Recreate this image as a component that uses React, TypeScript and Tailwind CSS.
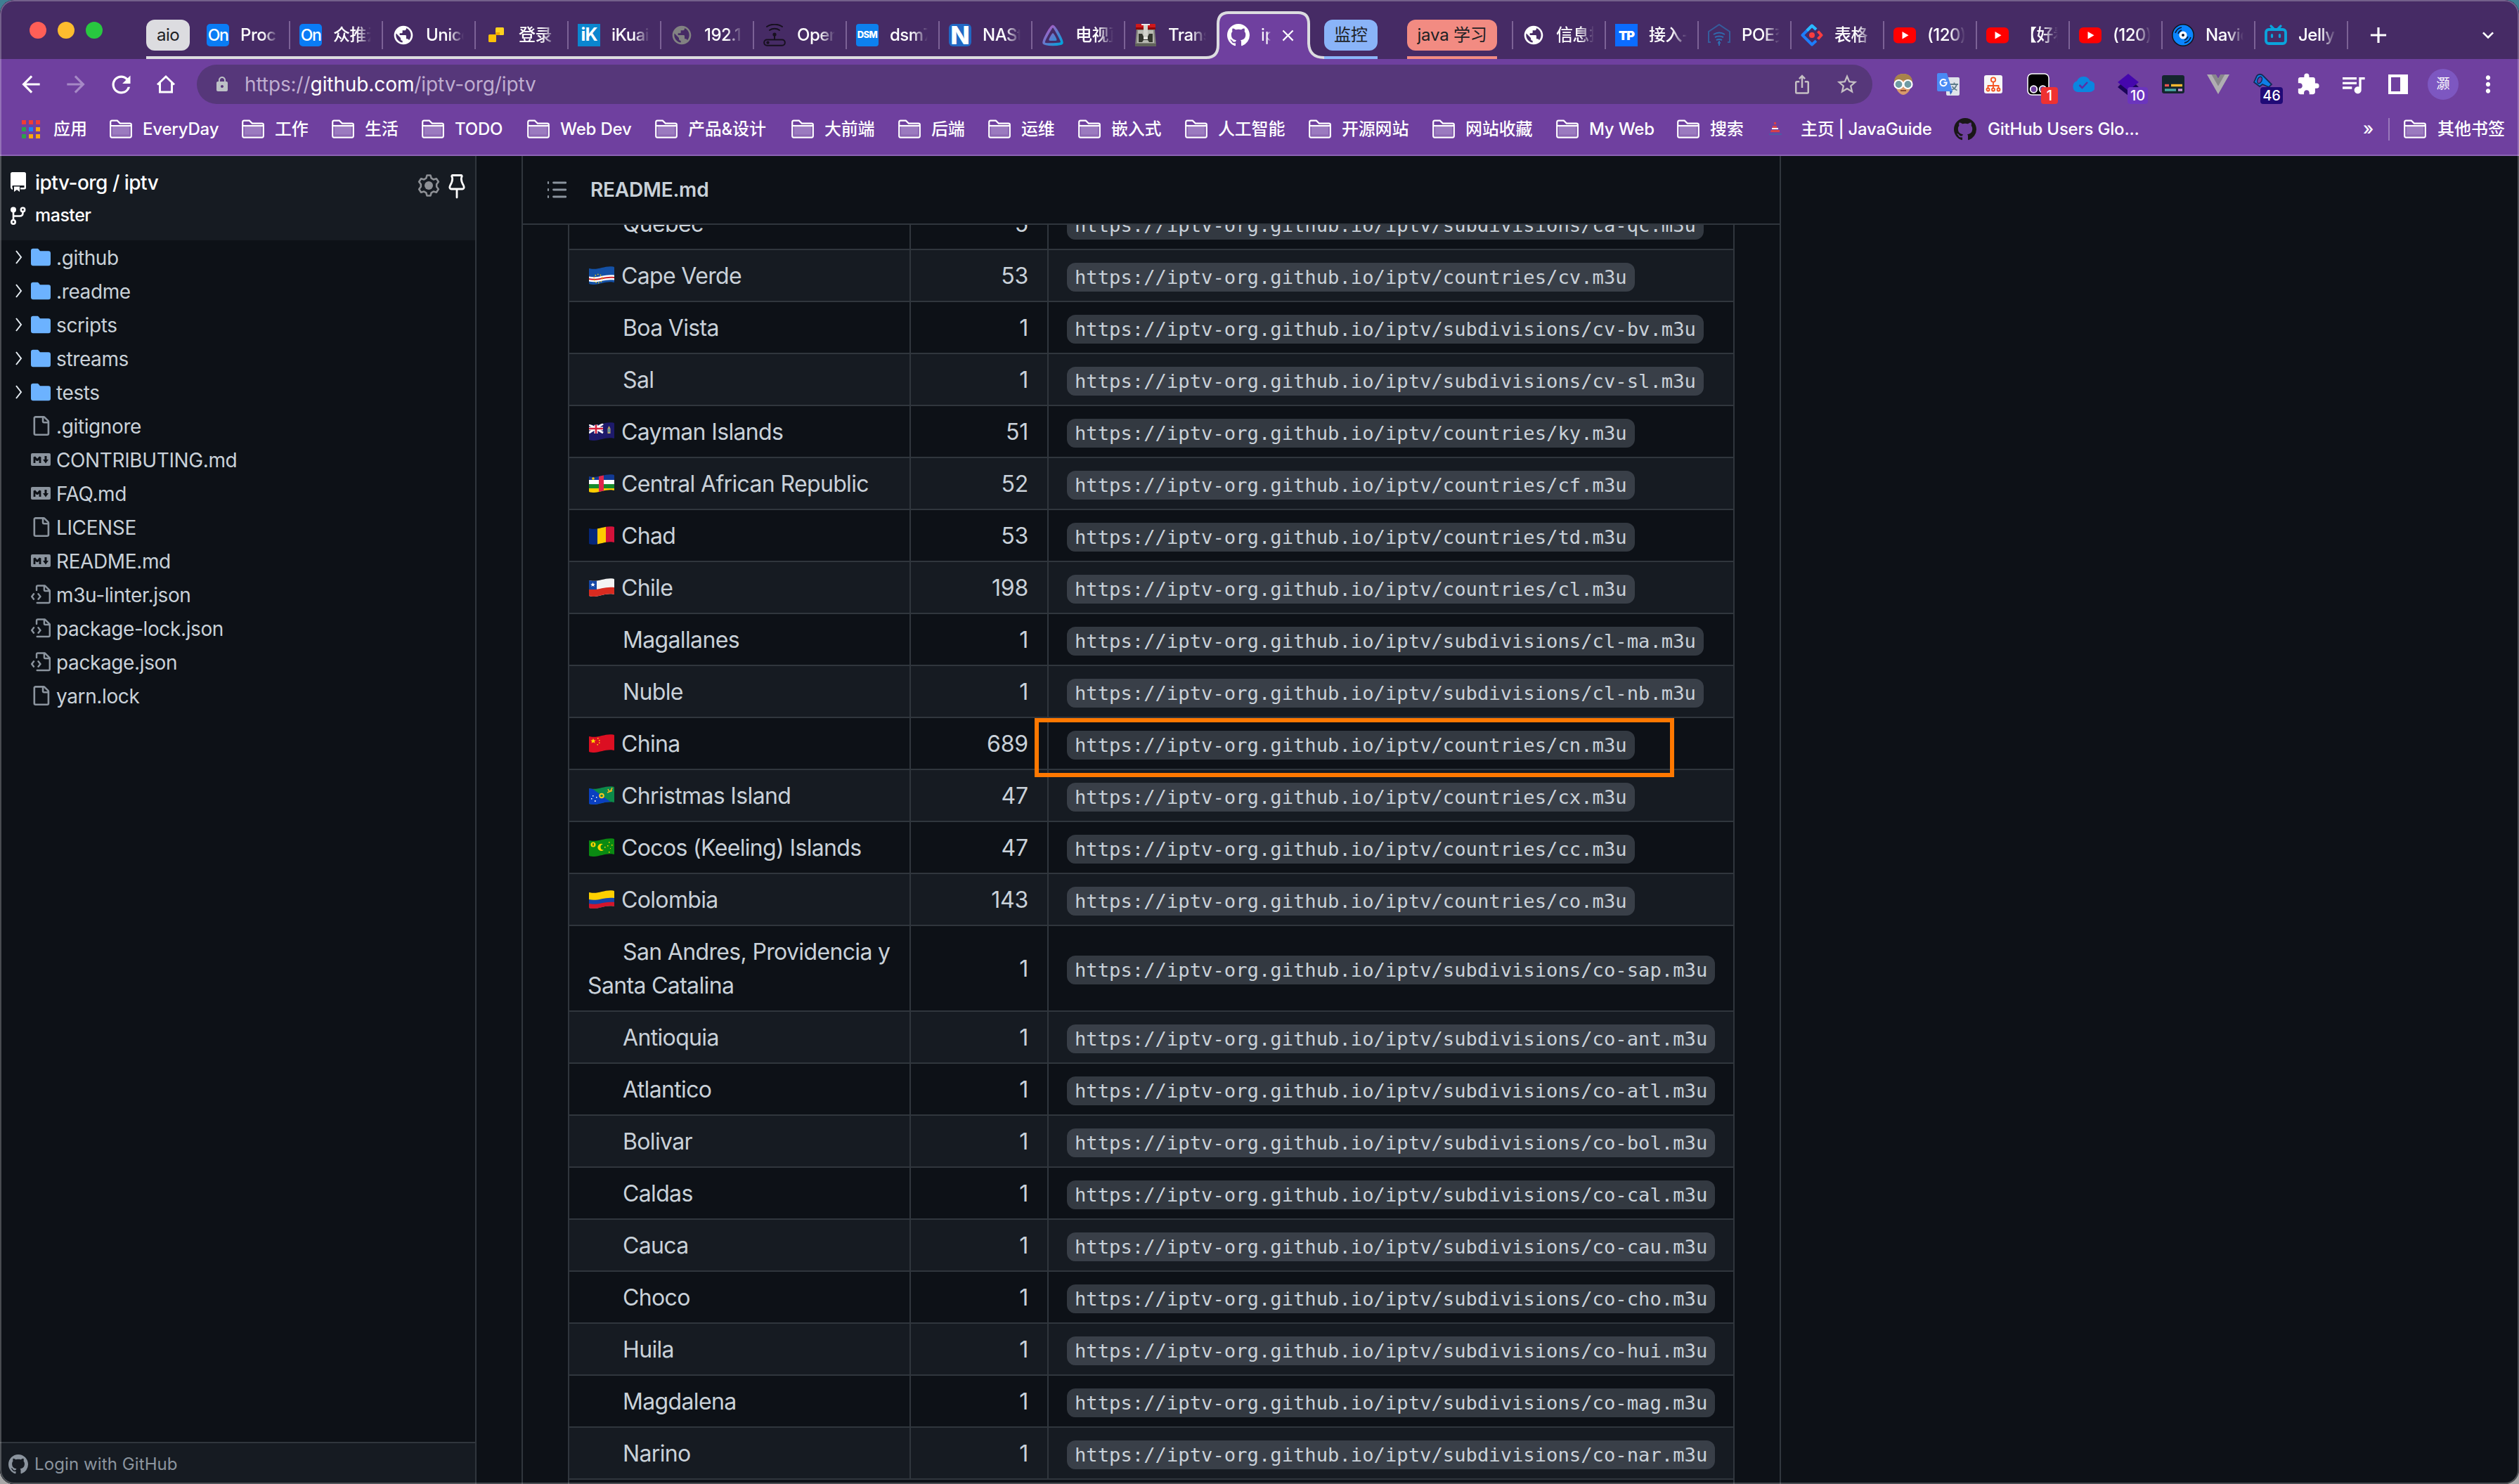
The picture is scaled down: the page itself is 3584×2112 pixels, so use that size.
import React, { useId } from 'react';
import {
  MdAdd,
  MdArrowBack,
  MdArrowForward,
  MdClose,
  MdExpandMore,
  MdExtension,
  MdIosShare,
  MdLock,
  MdMoreVert,
  MdPublic,
  MdQueueMusic,
  MdRefresh,
  MdStarBorder,
} from 'react-icons/md';

/* ---------- shared icons ---------- */

function GitHubMark({ className }: { className: string }) {
  return (
    <svg viewBox="0 0 16 16" fill="currentColor" className={className}>
      <path d="M8 0C3.58 0 0 3.58 0 8c0 3.54 2.29 6.53 5.47 7.59.4.07.55-.17.55-.38 0-.19-.01-.82-.01-1.49-2.01.37-2.53-.49-2.69-.94-.09-.23-.48-.94-.82-1.13-.28-.15-.68-.52-.01-.53.63-.01 1.08.58 1.23.82.72 1.21 1.87.87 2.33.66.07-.52.28-.87.51-1.07-1.78-.2-3.64-.89-3.64-3.95 0-.87.31-1.59.82-2.15-.08-.2-.36-1.02.08-2.12 0 0 .67-.21 2.2.82.64-.18 1.32-.27 2-.27.68 0 1.36.09 2 .27 1.53-1.04 2.2-.82 2.2-.82.44 1.1.16 1.92.08 2.12.51.56.82 1.27.82 2.15 0 3.07-1.87 3.75-3.65 3.95.29.25.54.73.54 1.48 0 1.07-.01 1.93-.01 2.2 0 .21.15.46.55.38A8.013 8.013 0 0016 8c0-4.42-3.58-8-8-8z" />
    </svg>
  );
}

function BookmarkFolder() {
  return (
    <svg viewBox="0 0 32 28" className="h-[28px] w-[32px] shrink-0" fill="none">
      <path d="M1.200 4C1.200 2.500 2 1.600 3.300 1.600h7.500l4 4h14c1.400 0 2 .8 2 2v16c0 1.300-.6 2-2 2H3.200c-1.400 0-2-.7-2-2Z" stroke="#fff" strokeWidth="2.200" />
      <path d="M3.500 10h25v14h-25Z" fill="#9b7abf" />
      <path d="M3.500 21.500h25V24h-25Z" fill="#8d68b4" />
      <path d="M2 9h28" stroke="#fff" strokeWidth="2.200" />
    </svg>
  );
}

/* ---------- tab favicons ---------- */

function OnIcon() {
  return (
    <div className="flex size-[32px] items-center justify-center rounded-[5px] bg-[#0a7cf5] text-[23px] font-medium tracking-[-1.500px] text-white">On</div>
  );
}

function YellowBlocks() {
  return (
    <svg viewBox="0 0 32 32" className="size-[32px]">
      <rect x="15" y="5" width="12" height="11" rx="1.500" fill="#ffd21f" />
      <rect x="5" y="15" width="11" height="11" rx="1.500" fill="#ffc107" />
      <path d="M15 12h6v4h-6z" fill="#f0a500" />
    </svg>
  );
}

function IkIcon() {
  return (
    <div className="flex size-[32px] items-center justify-center bg-[#0b86cf] text-[25px] font-bold tracking-[-1px] text-white">iK</div>
  );
}

function RouterIcon() {
  return (
    <svg viewBox="0 0 32 32" className="size-[32px]" fill="none" stroke="#17101f" strokeWidth="2" strokeLinecap="round">
      <rect x="1.200" y="22.500" width="29.600" height="8.300" rx="4" />
      <path d="M16 22V15M5 4c6-4.500 16-4.500 22 0M9 9c4-3 10-3 14 0" />
      <circle cx="16" cy="15" r="1.600" />
      <circle cx="6.500" cy="26.600" r="1.200" />
    </svg>
  );
}

function DsmIcon() {
  return (
    <div className="flex size-[32px] items-center justify-center rounded-[4px] bg-[#0d80ee] text-[13px] font-extrabold tracking-[-0.500px] text-white">DSM</div>
  );
}

function NasIcon() {
  return (
    <div className="flex size-[32px] items-center justify-center rounded-[6px] bg-[#2168c4] text-[36px] leading-none font-extrabold text-white">N</div>
  );
}

function JellyfinIcon() {
  const id = useId();
  return (
    <svg viewBox="0 0 32 32" className="size-[32px]" fill="none">
      <defs>
        <linearGradient id={id} x1="6" y1="8" x2="27" y2="30" gradientUnits="userSpaceOnUse">
          <stop stopColor="#aa5cc3" />
          <stop offset="1" stopColor="#00a4dc" />
        </linearGradient>
      </defs>
      <path d="M16 3.500C13.500 3.500 1.800 24.500 3.200 27.200c1.300 2.700 24.400 2.700 25.600 0C30 24.500 18.500 3.500 16 3.500Z" stroke={`url(#${id})`} strokeWidth="3.800" />
      <path d="M16 13c-1.300 0-6.200 9-5.500 10.200.6 1.200 10.500 1.200 11 0C22.200 22 17.300 13 16 13Z" fill={`url(#${id})`} />
    </svg>
  );
}

function TransmissionIcon() {
  return (
    <svg viewBox="0 0 32 32" className="size-[32px]">
      <path d="M3 8h26l2 24H1Z" fill="#83857c" />
      <path d="M5 9h22l1 18H4Z" fill="#b9bab2" />
      <rect x="2" y="0" width="28" height="8" rx="1" fill="#d0181b" />
      <rect x="2" y="5" width="28" height="3" fill="#8d0709" />
      <path d="M10 0h12v2H10Z" fill="#e9e9e9" />
      <path d="M6 14h5l2 4h6l2-4h5v12h-5l-2-3h-6l-2 3H6Z" fill="#34362f" />
      <rect x="13" y="2" width="6" height="15" fill="#d2d3cd" />
      <rect x="13" y="18" width="6" height="4" fill="#e6e6e0" />
      <rect x="1" y="28" width="30" height="4" fill="#60625a" />
    </svg>
  );
}

function TpIcon() {
  return (
    <div className="flex size-[32px] items-center justify-center bg-[#0b6cff] text-[18px] font-black tracking-[-1px] text-white">TP</div>
  );
}

function PoeIcon() {
  return (
    <svg viewBox="0 0 32 32" className="size-[32px]" fill="none" stroke="#355d9c" strokeWidth="2">
      <path d="M4 26H1V11L16 1l15 10v15h-3" />
      <path d="M8 15c5-3 11-3 16 0M10 19c4-2 8-2 12 0M12 23c3-1.500 5-1.500 8 0M14 27h4M16 24v7" stroke="#2f6db0" />
    </svg>
  );
}

function SheetIcon() {
  return (
    <svg viewBox="0 0 32 32" className="size-[32px]" fill="none" strokeWidth="4" strokeLinejoin="round">
      <path d="M22 8 16 2.500 2.500 16 16 29.500l6-5.500" stroke="#1d7dfb" />
      <path d="M22 8 16 2.500 9 9.500" stroke="#2bb8fd" />
      <path d="m24.500 10.500 5 5.500-5 5.500" stroke="#fa3c3f" />
      <circle cx="16" cy="16" r="4" fill="#fa3c3f" />
    </svg>
  );
}

function YouTubeIcon() {
  return (
    <svg viewBox="0 0 32 32" className="size-[32px]">
      <rect x="0" y="5" width="32" height="22.500" rx="6" fill="#f00" />
      <path d="m12.500 11 9 5.200-9 5.200Z" fill="#fff" />
    </svg>
  );
}

function NaviIcon() {
  return (
    <svg viewBox="0 0 32 32" className="size-[32px]" fill="none">
      <circle cx="16" cy="16" r="15.200" fill="#0a84ff" stroke="#10131a" strokeWidth="1.500" />
      <path d="M5 13A12 12 0 0 1 14 5M9 14a8 8 0 0 1 5-5M27 19a12 12 0 0 1-9 8M23 18a8 8 0 0 1-5 5" stroke="#0b1a33" strokeWidth="1.500" />
      <circle cx="16" cy="16" r="5.500" fill="#fff" />
      <circle cx="16" cy="16" r="2" fill="#0b1a33" />
    </svg>
  );
}

function BiliIcon() {
  return (
    <svg viewBox="0 0 32 32" className="size-[32px]" fill="none" stroke="#0aa4dc" strokeWidth="3.800" strokeLinecap="round">
      <rect x="2" y="8" width="28" height="20" rx="4" />
      <path d="m9 3 4 4M23 3l-4 4M10.500 15.500v3M21.500 15.500v3" strokeWidth="3.200" />
    </svg>
  );
}

/* ---------- tab strip ---------- */

type TabData = { icon: React.ReactNode; title: string };

const groupTabs: TabData[] = [
  { icon: <OnIcon />, title: 'Proc' },
  { icon: <OnIcon />, title: '众推云' },
  { icon: <MdPublic className="size-[34px] text-white" />, title: 'Unico' },
  { icon: <YellowBlocks />, title: '登录' },
  { icon: <IkIcon />, title: 'iKuai' },
  { icon: <MdPublic className="size-[34px] text-[#828282]" />, title: '192.1' },
  { icon: <RouterIcon />, title: 'Open' },
  { icon: <DsmIcon />, title: 'dsm7' },
  { icon: <NasIcon />, title: 'NASt' },
  { icon: <JellyfinIcon />, title: '电视直' },
  { icon: <TransmissionIcon />, title: 'Trans' },
];

const looseTabs: TabData[] = [
  { icon: <MdPublic className="size-[34px] text-white" />, title: '信息技' },
  { icon: <TpIcon />, title: '接入-' },
  { icon: <PoeIcon />, title: 'POE交' },
  { icon: <SheetIcon />, title: '表格' },
  { icon: <YouTubeIcon />, title: '(120)' },
  { icon: <YouTubeIcon />, title: '【好看' },
  { icon: <YouTubeIcon />, title: '(120)' },
  { icon: <NaviIcon />, title: 'Navid' },
  { icon: <BiliIcon />, title: 'Jelly' },
];

function Tab({ tab, divider }: { tab: TabData; divider: boolean }) {
  return (
    <div className="flex h-[40px] w-[132px] shrink-0 items-center">
      <div className="ml-[13px] flex size-[32px] shrink-0 items-center justify-center">{tab.icon}</div>
      <div className="ml-[16px] w-[54px] overflow-hidden text-[24px] font-medium tracking-[-0.500px] whitespace-nowrap text-white [mask-image:linear-gradient(to_right,#000_60%,transparent)]">
        {tab.title}
      </div>
      {divider && <div className="ml-auto h-[40px] w-[2px] bg-[#7c6296]" />}
    </div>
  );
}

function TabStrip() {
  return (
    <div className="relative flex h-[84px] shrink-0 items-center bg-[#462b65] pt-[16px]">
      <svg viewBox="0 0 3584 84" className="absolute top-0 left-0 h-[84px] w-[3584px]" fill="none">
        <path d="M1711 84Q1733 84 1733 66V34Q1733 18 1748 18H1847Q1862 18 1862 34V62Q1863 84 1886 84Z" fill="#6f409f" />
        <path d="M208 82H1716Q1733 82 1733 64V34Q1733 18 1748 18H1847Q1862 18 1862 34V62Q1863 82 1884 82" stroke="#dcdce0" strokeWidth="4" />
        <path d="M1884 82h76" stroke="#8ab4f8" strokeWidth="4" />
        <path d="M2002 82h128" stroke="#f28b82" strokeWidth="4" />
      </svg>
      <div className="relative -mt-[16px] flex h-[68px] items-center pt-[16px]">
        <div className="ml-[42px] flex gap-[16px] pb-[14px]">
          <div className="size-[24px] rounded-full bg-[#ff5f57]" />
          <div className="size-[24px] rounded-full bg-[#febc2e]" />
          <div className="size-[24px] rounded-full bg-[#28c840]" />
        </div>
        <div className="ml-[62px] flex h-[44px] w-[62px] items-center justify-center rounded-[12px] bg-[#dcdce0] text-[24px] tracking-[-0.500px] text-[#202124]">aio</div>
        <div className="ml-[11px] flex">
          {groupTabs.map((tab, i) => (
            <Tab key={i} tab={tab} divider={i < groupTabs.length - 1} />
          ))}
        </div>
        <div className="flex w-[132px] shrink-0 items-center">
          <GitHubMark className="ml-[13px] size-[32px] text-white" />
          <div className="ml-[16px] w-[14px] overflow-hidden text-[24px] text-white [mask-image:linear-gradient(to_right,#000_60%,transparent)]">ip</div>
          <MdClose className="ml-[11px] size-[27px] text-white" />
        </div>
        <div className="ml-[19px] flex h-[44px] w-[76px] items-center justify-center rounded-[12px] bg-[#8ab4f8] text-[24px] text-[#202124]">监控</div>
        <div className="ml-[42px] flex h-[44px] w-[128px] items-center justify-center rounded-[12px] bg-[#f28b82] text-[24px] tracking-[-0.200px] text-[#202124]">java 学习</div>
        <div className="ml-[21px] h-[40px] w-[2px] bg-[#7c6296]" />
        <div className="flex">
          {looseTabs.map((tab, i) => (
            <Tab key={i} tab={tab} divider />
          ))}
        </div>
        <MdAdd className="ml-[24px] size-[38px] text-white" />
        <MdExpandMore className="ml-[121px] size-[32px] text-white" />
      </div>
    </div>
  );
}

/* ---------- toolbar ---------- */

function Cell({ children }: { children: React.ReactNode }) {
  return <div className="relative flex h-[56px] w-[64px] shrink-0 items-center justify-center">{children}</div>;
}

function Badge({ className, children }: { className: string; children: React.ReactNode }) {
  return (
    <div className={`absolute top-[32px] flex h-[24px] items-center justify-center rounded-[4px] text-[20px] leading-none font-medium text-white ${className}`}>
      {children}
    </div>
  );
}

function Extensions() {
  return (
    <div className="ml-[12px] flex">
      <Cell>
        <svg viewBox="0 0 32 32" className="size-[32px]">
          <path d="M4 16C2 4 10 1 16 1s14 3 12 15l-3 8c-2 4-6 7-9 7s-7-3-9-7Z" fill="#d99a6c" />
          <path d="M3 15C2 4 10 1 16 1s14 3 13 14l-3-4c-6-1-13-1-20 0Z" fill="#a8834b" />
          <circle cx="9.500" cy="16" r="6" fill="#6f9ba3" stroke="#fff" strokeWidth="2.200" />
          <circle cx="22.500" cy="16" r="6" fill="#6f9ba3" stroke="#fff" strokeWidth="2.200" />
          <path d="M12 25h8" stroke="#8c4b35" strokeWidth="2" />
        </svg>
      </Cell>
      <Cell>
        <svg viewBox="0 0 32 32" className="size-[32px]">
          <rect x="13" y="6" width="19" height="26" rx="2" fill="#dfe3ea" />
          <path d="M2 0h12l8 26H2a2 2 0 0 1-2-2V2a2 2 0 0 1 2-2Z" fill="#4a8af4" />
          <path d="M18 26h4l-3 5Z" fill="#2f5fc0" />
          <path d="M12.500 10.500A4.600 4.600 0 1 0 13.700 13.500H9.500" fill="none" stroke="#fff" strokeWidth="2" />
          <path d="M19 16h11M24.500 13.500V16M28 16c-1 4-4 7-7 8M21.500 19c2 3 4 4.500 7 5.500" fill="none" stroke="#617d8b" strokeWidth="1.800" />
        </svg>
      </Cell>
      <Cell>
        <svg viewBox="0 0 32 32" className="size-[32px]" fill="none" stroke="#f4511e" strokeWidth="1.800">
          <rect x="3" y="3" width="26" height="26" rx="3" fill="#f7f7f7" stroke="none" />
          <circle cx="16" cy="9.500" r="3.200" />
          <path d="M16 13v9M8.500 21v-3h15v3" />
          <circle cx="8.500" cy="23.500" r="2" />
          <circle cx="16" cy="23.500" r="2" />
          <circle cx="23.500" cy="23.500" r="2" />
        </svg>
      </Cell>
      <Cell>
        <svg viewBox="0 0 32 32" className="size-[32px]">
          <rect x="1" y="1" width="30" height="30" rx="6" fill="#000" stroke="#fff" strokeWidth="1.500" />
          <circle cx="9.500" cy="23" r="4.800" fill="#6f409f" stroke="#fff" strokeWidth="1.800" />
          <circle cx="22.500" cy="23" r="4.800" fill="#6f409f" stroke="#fff" strokeWidth="1.800" />
        </svg>
        <Badge className="left-[36px] w-[24px] bg-[#ef3131]">1</Badge>
      </Cell>
      <Cell>
        <svg viewBox="0 0 32 32" className="size-[32px]">
          <path d="M8 27a8 8 0 0 1-1-15.500A10 10 0 0 1 25.500 11 8 8 0 0 1 24.500 27Z" fill="#0a86e0" />
          <path d="m10.500 17 4 4 7.500-8" fill="none" stroke="#5b2fa5" strokeWidth="2.500" />
        </svg>
      </Cell>
      <Cell>
        <svg viewBox="0 0 32 32" className="size-[32px]">
          <path d="m1 20 5-5 10 9 10-9 5 5-15 12Z" fill="#1a0558" />
          <path d="M16 1 31 13 16 25 1 13Z" fill="#4507ad" />
        </svg>
        <Badge className="left-[31px] w-[29px] bg-[#6b35bd]">10</Badge>
      </Cell>
      <Cell>
        <svg viewBox="0 0 32 32" className="size-[32px]">
          <rect x="0" y="3" width="32" height="26" rx="3" fill="#14262e" />
          <path d="M4 17.500h6" stroke="#e8544f" strokeWidth="3.400" />
          <path d="M13 17.500h16" stroke="#fbb930" strokeWidth="3.400" />
          <path d="M4 24h16" stroke="#4aa9a5" strokeWidth="3.400" />
          <path d="M23 24h6" stroke="#c792d6" strokeWidth="3.400" />
        </svg>
      </Cell>
      <Cell>
        <svg viewBox="0 0 32 32" className="size-[32px]">
          <path d="M0 2h12.500L16 8l3.500-6H32L16 30Z" fill="#b0aeb2" />
          <path d="M6.500 2h6L16 8l3.500-6h6L16 18.500Z" fill="#88868b" />
        </svg>
      </Cell>
      <Cell>
        <svg viewBox="0 0 32 32" className="size-[32px]">
          <path d="M3 13 7 4c2-3 7-3 9 0l12 12-4 4-9-4-4 3Z" fill="#0d7fe8" stroke="#142a56" strokeWidth="1.800" />
          <ellipse cx="11" cy="10" rx="3" ry="5" transform="rotate(24 11 10)" fill="#6f409f" stroke="#142a56" strokeWidth="1.500" />
        </svg>
        <Badge className="left-[28px] w-[32px] bg-[#200a77]">46</Badge>
      </Cell>
      <Cell>
        <MdExtension className="size-[34px] text-white" />
      </Cell>
      <Cell>
        <MdQueueMusic className="size-[40px] text-white" />
      </Cell>
      <Cell>
        <svg viewBox="0 0 28 28" className="size-[28px]">
          <path d="M0 0h28v28H0ZM4 4v20h13V4Z" fill="#fff" fillRule="evenodd" />
        </svg>
      </Cell>
      <Cell>
        <div className="flex size-[44px] items-center justify-center rounded-full bg-[#7d57c1] text-[19px] text-white">灏</div>
      </Cell>
      <Cell>
        <MdMoreVert className="size-[38px] text-white" />
      </Cell>
    </div>
  );
}

function Toolbar() {
  return (
    <div className="flex h-[72px] shrink-0 items-center pl-[12px]">
      <Cell>
        <MdArrowBack className="size-[38px] text-white" />
      </Cell>
      <Cell>
        <MdArrowForward className="size-[38px] text-[#a689c6]" />
      </Cell>
      <Cell>
        <MdRefresh className="size-[39px] text-white" />
      </Cell>
      <Cell>
        <svg viewBox="0 0 28 28" className="size-[28px]" fill="none" stroke="#fff" strokeWidth="3">
          <path d="M2 14.500 14 3l12 11.500M5.500 12v13h17V12" />
        </svg>
      </Cell>
      <div className="ml-[12px] flex h-[56px] w-[2384px] shrink-0 items-center rounded-full bg-[#56377a]">
        <MdLock className="ml-[24px] size-[24px] text-[#bdc1c6]" />
        <div className="ml-[20px] text-[28px] tracking-[-0.100px] text-[#bfaed0]">
          https://<span className="text-white">github.com</span>/iptv-org/iptv
        </div>
        <div className="mr-[4px] ml-auto flex text-[#c5c0c4]">
          <Cell>
            <MdIosShare className="size-[30px]" />
          </Cell>
          <Cell>
            <MdStarBorder className="size-[34px]" />
          </Cell>
        </div>
      </div>
      <Extensions />
    </div>
  );
}

/* ---------- bookmarks ---------- */

const bookmarks = [
  { label: 'EveryDay', width: 'w-[188px]' },
  { label: '工作', width: 'w-[128px]' },
  { label: '生活', width: 'w-[128px]' },
  { label: 'TODO', width: 'w-[150px]' },
  { label: 'Web Dev', width: 'w-[182px]' },
  { label: '产品&设计', width: 'w-[194px]' },
  { label: '大前端', width: 'w-[152px]' },
  { label: '后端', width: 'w-[128px]' },
  { label: '运维', width: 'w-[128px]' },
  { label: '嵌入式', width: 'w-[152px]' },
  { label: '人工智能', width: 'w-[176px]' },
  { label: '开源网站', width: 'w-[176px]' },
  { label: '网站收藏', width: 'w-[176px]' },
  { label: 'My Web', width: 'w-[172px]' },
  { label: '搜索', width: 'w-[128px]' },
];

function AppsIcon() {
  const colors = ['#f23c34', '#f23c34', '#f23c34', '#2ba24c', '#1a82f7', '#fba70b', '#2ba24c', '#fba70b', '#fba70b'];
  return (
    <div className="mx-[3px] grid w-[26px] grid-cols-3 gap-x-[4px] gap-y-[4px]">
      {colors.map((c, i) => (
        <div key={i} className="h-[6px]" style={{ background: c }} />
      ))}
    </div>
  );
}

function Bookmarks() {
  return (
    <div className="flex h-[64px] shrink-0 items-center pb-[8px] pl-[28px] text-[24px] font-medium whitespace-nowrap text-white">
      <div className="flex w-[128px] shrink-0 items-center">
        <AppsIcon />
        <span className="ml-[16px]">应用</span>
      </div>
      {bookmarks.map((b) => (
        <div key={b.label} className={`flex shrink-0 items-center ${b.width}`}>
          <BookmarkFolder />
          <span className="ml-[15px] tracking-[-0.200px]">{b.label}</span>
        </div>
      ))}
      <div className="flex w-[266px] shrink-0 items-center">
        <svg viewBox="0 0 32 32" className="size-[32px]">
          <path d="M10 6h3v3h-3ZM8 11h6v3H8Z" fill="#d8414a" />
          <path d="M7 14h9v2H7Z" fill="#fff" />
          <path d="M6 17h12v3H5Z" fill="#d8414a" />
          <path d="M3 23h18" stroke="#4a5ca5" strokeWidth="2" />
        </svg>
        <span className="ml-[16px] tracking-[-0.300px]">主页 | JavaGuide</span>
      </div>
      <div className="flex w-[280px] shrink-0 items-center">
        <GitHubMark className="size-[32px] text-[#191717]" />
        <span className="ml-[16px] tracking-[-0.200px]">GitHub Users Glo...</span>
      </div>
      <span className="ml-[302px] w-[17px] text-[25px]">»</span>
      <div className="ml-[19px] h-[32px] w-[2px] bg-[#9a79bb]" />
      <div className="ml-[20px] flex items-center">
        <BookmarkFolder />
        <span className="ml-[16px]">其他书签</span>
      </div>
    </div>
  );
}

/* ---------- file tree ---------- */

type Entry = { name: string; kind: 'dir' | 'file' | 'md' | 'code' };

const entries: Entry[] = [
  { name: '.github', kind: 'dir' },
  { name: '.readme', kind: 'dir' },
  { name: 'scripts', kind: 'dir' },
  { name: 'streams', kind: 'dir' },
  { name: 'tests', kind: 'dir' },
  { name: '.gitignore', kind: 'file' },
  { name: 'CONTRIBUTING.md', kind: 'md' },
  { name: 'FAQ.md', kind: 'md' },
  { name: 'LICENSE', kind: 'file' },
  { name: 'README.md', kind: 'md' },
  { name: 'm3u-linter.json', kind: 'code' },
  { name: 'package-lock.json', kind: 'code' },
  { name: 'package.json', kind: 'code' },
  { name: 'yarn.lock', kind: 'file' },
];

function EntryIcon({ kind }: { kind: Entry['kind'] }) {
  if (kind === 'dir') {
    return (
      <svg viewBox="0 0 16 16" className="size-[28px]" fill="#6cb2ff">
        <path d="M1.750 1A1.750 1.750 0 0 0 0 2.750v10.500C0 14.216.784 15 1.750 15h12.500A1.750 1.750 0 0 0 16 13.250v-8.500A1.750 1.750 0 0 0 14.250 3H7.500a.25.25 0 0 1-.2-.1l-.9-1.200C6.070 1.260 5.550 1 5 1H1.750Z" />
      </svg>
    );
  }
  if (kind === 'md') {
    return (
      <svg viewBox="0 0 28 18" className="h-[18px] w-[28px]" fill="none" stroke="#0d1117">
        <rect width="28" height="18" rx="2" fill="#8b949e" stroke="none" />
        <path d="M5 14V5.500L9 10l4-4.500V14" strokeWidth="2.800" strokeLinejoin="bevel" />
        <path d="M21 4v6" strokeWidth="3" />
        <path d="M17 9h8l-4 5.500Z" fill="#0d1117" stroke="none" />
      </svg>
    );
  }
  if (kind === 'code') {
    return (
      <svg viewBox="0 0 16 16" className="size-[28px]" fill="none" stroke="#8b949e" strokeWidth="1.400" strokeLinecap="round" strokeLinejoin="round">
        <path d="M4.600 4.500V1.900c0-.6.400-1 1-1h5.800l3.900 3.900v9.100c0 .6-.4 1-1 1H5M10.800 1v3.300c0 .5.300.8.800.8h3.500" />
        <path d="M2.300 7.600.7 9.700l1.600 2.100M6 7.600l1.700 2.100L6 11.800" />
      </svg>
    );
  }
  return (
    <svg viewBox="0 0 16 16" className="size-[28px]" fill="#8b949e">
      <path d="M2 1.750C2 .784 2.784 0 3.750 0h6.586c.464 0 .909.184 1.237.513l2.914 2.914c.329.328.513.773.513 1.237v9.586A1.750 1.750 0 0 1 13.250 16h-9.500A1.750 1.750 0 0 1 2 14.250Zm1.750-.25a.25.25 0 0 0-.25.25v12.500c0 .138.112.25.25.25h9.500a.25.25 0 0 0 .25-.25V6h-2.750A1.750 1.750 0 0 1 9 4.250V1.500Zm6.750.062V4.250c0 .138.112.25.25.25h2.688l-.011-.013-2.914-2.914-.013-.011Z" />
    </svg>
  );
}

function Sidebar() {
  return (
    <aside className="flex w-[678px] shrink-0 flex-col border-r-2 border-[#30363d] bg-[#0d1117]">
      <div className="flex h-[120px] shrink-0 bg-[#161b22] pl-[15px] text-white">
        <div>
          <div className="mt-[22px] flex h-[32px] items-center">
            <svg viewBox="0 0 22 28" className="mt-[-2px] h-[28px] w-[22px]" fill="#fff">
              <path d="M2.500 0h17A2.500 2.500 0 0 1 22 2.500v19.500a2.500 2.500 0 0 1-2.500 2.500H14V22H19.500v-3H3.500C2 19 2 22 3 22.500V25C1 24.500 0 23 0 21V2.500A2.500 2.500 0 0 1 2.500 0Z" />
              <path d="M5 20.500h8V28l-4-3-4 3Z" />
            </svg>
            <span className="ml-[13px] text-[28px] font-medium tracking-[-0.500px]">iptv-org / iptv</span>
          </div>
          <div className="mt-[15px] flex h-[32px] items-center">
            <svg viewBox="0 0 22 26" className="h-[26px] w-[22px]" fill="none" stroke="#fff" strokeWidth="2.600">
              <circle cx="4" cy="4.500" r="2.700" fill="#fff" />
              <circle cx="4" cy="22" r="2.700" />
              <circle cx="17.500" cy="4.500" r="2.700" />
              <path d="M4 7v12M17.500 7.500v1.500c0 3-1.500 4.500-4.500 4.500H4" />
            </svg>
            <span className="ml-[13px] text-[25px] font-medium tracking-[-0.500px]">master</span>
          </div>
        </div>
        <div className="mt-[25px] mr-[14px] ml-auto flex items-start gap-[12px]">
          <svg viewBox="0 0 32 34" className="h-[34px] w-[32px]" fill="none" stroke="#8d9095" strokeWidth="2.600" strokeLinejoin="round">
            <path d="M13.500 2.500h5l1.200 4.200 3 1.700 4.200-1.200 2.900 4.600-2.600 3.500v3.400l2.600 3.500-2.900 4.600-4.200-1.200-3 1.700-1.200 4.200h-5l-1.200-4.200-3-1.700-4.200 1.200-2.900-4.600 2.600-3.500v-3.400l-2.600-3.500 2.900-4.600 4.200 1.200 3-1.700Z" />
            <circle cx="16" cy="17" r="6" fill="#8d9095" stroke="none" />
          </svg>
          <svg viewBox="0 0 24 36" className="h-[36px] w-[24px]" fill="none" stroke="#fff" strokeWidth="2.800" strokeLinejoin="round" strokeLinecap="round">
            <path d="M6 2.500h12c1 0 1.500 1 1 2-1.300 3-.8 7 2.500 12.500 1.300 3 .5 5-1.500 5H4c-2 0-2.800-2-1.500-5C5.800 11.500 6.300 7.500 5 4.500c-.5-1 0-2 1-2ZM12 22v12" />
          </svg>
        </div>
      </div>
      <div className="flex flex-col">
        {entries.map((e) => (
          <div key={e.name} className="flex h-[48px] items-center pl-[20px] text-[28px] tracking-[-0.380px] text-[#c9d1d9]">
            <div className="flex w-[24px] shrink-0">
              {e.kind === 'dir' && (
                <svg viewBox="0 0 12 20" className="h-[20px] w-[12px]" fill="none" stroke="#e6edf3" strokeWidth="2">
                  <path d="m3 1 7 9-7 9" />
                </svg>
              )}
            </div>
            <EntryIcon kind={e.kind} />
            <span className="ml-[8px] pt-[1px]">{e.name}</span>
          </div>
        ))}
      </div>
      <div className="mt-auto flex h-[60px] shrink-0 items-center border-t-2 border-[#30363d] bg-[#161b22] pt-[1px] pl-[12px] text-[#8b949e]">
        <GitHubMark className="size-[28px]" />
        <span className="ml-[9px] pt-[1px] text-[24px] tracking-[0.100px]">Login with GitHub</span>
      </div>
    </aside>
  );
}

/* ---------- flags ---------- */

const flagArt: Record<string, React.ReactNode> = {
  cv: (
    <>
      <rect width="36" height="26" fill="#1451a6" />
      <path d="M0 14.500c12 3 22-4 36-2v7c-14-2-24 5-36 2Z" fill="#fff" />
      <path d="M0 17c12 3 22-4 36-2v2c-14-2-24 5-36 2Z" fill="#cf2027" />
      <circle cx="13" cy="17.500" r="6" fill="none" stroke="#f7d116" strokeWidth="1.500" strokeDasharray="1.500 2.300" />
    </>
  ),
  ky: (
    <>
      <rect width="36" height="26" fill="#1d1a6b" />
      <path d="m0 3 20 12M0 15 20 2" stroke="#fff" strokeWidth="3" />
      <path d="M10 2v14M0 9h20" stroke="#fff" strokeWidth="5" />
      <path d="M10 2v14M0 9h20" stroke="#d4213d" strokeWidth="2.500" />
      <path d="M26.500 9l2-4 2 4v7h-4Z" fill="#b9a564" />
      <path d="M27.500 9h2v5h-2Z" fill="#3d8fb0" />
    </>
  ),
  cf: (
    <>
      <rect width="36" height="8" fill="#123a94" />
      <rect y="8" width="36" height="6" fill="#fff" />
      <rect y="14" width="36" height="6" fill="#178a2c" />
      <rect y="20" width="36" height="6" fill="#ffce00" />
      <rect x="14" width="7" height="26" fill="#e0254c" />
      <circle cx="6" cy="6" r="1.800" fill="#ffce00" />
    </>
  ),
  td: (
    <>
      <rect width="12" height="26" fill="#05277a" />
      <rect x="12" width="12" height="26" fill="#fecb00" />
      <rect x="24" width="12" height="26" fill="#d3123a" />
    </>
  ),
  cl: (
    <>
      <rect width="36" height="26" fill="#f3f3f3" />
      <path d="M0 15c12 3 22-4 36-2v13H0Z" fill="#d92b20" />
      <path d="M0 0h11v16H0Z" fill="#1447a8" />
      <path d="m5.500 6 1 2h2.200l-1.700 1.500.6 2.200-2.100-1.300-2.100 1.300.6-2.200L2.300 8h2.200Z" fill="#fff" />
    </>
  ),
  cn: (
    <>
      <rect width="36" height="26" fill="#dc0f22" />
      <path d="m6 6 1.200 2.500h2.500l-2 1.700.8 2.600-2.500-1.500-2.500 1.500.8-2.600-2-1.700h2.500Z" fill="#ffde00" />
      <path d="M12 5h1.500v1.500H12ZM14 8h1.500v1.500H14ZM14 11.500h1.500V13H14ZM11.500 14H13v1.500h-1.500Z" fill="#ffde00" />
    </>
  ),
  cx: (
    <>
      <rect width="36" height="26" fill="#0c8a4a" />
      <path d="M0 0v26h36Z" fill="#0a3fc0" />
      <circle cx="18" cy="13.500" r="3.800" fill="#ffc61e" />
      <circle cx="18" cy="13.500" r="1.800" fill="#0c8a4a" />
      <path d="M27 4c1 3 3 5 6 2M33 2c-1 4-3 6-7 7" stroke="#f6b221" strokeWidth="1.500" fill="none" />
      <path d="M5 13h1.500v1.500H5ZM8 20h1.500v2H8ZM10 15h1.500v1.500H10ZM3 17h1.500v1.500H3Z" fill="#fff" />
    </>
  ),
  cc: (
    <>
      <rect width="36" height="26" fill="#0a8a12" />
      <circle cx="6" cy="9" r="3.500" fill="#ffd500" />
      <path d="M6 7v4M5 8.500h2" stroke="#0a6a12" strokeWidth="1.200" />
      <path d="M20 8.500a5 5 0 1 0 1 8 4 4 0 1 1-1-8Z" fill="#ffd500" />
      <path d="M28 5h1.500v1.500H28ZM32 9h1.500v1.500H32ZM26 10h1.500v1.500H26ZM30 14h1v1h-1ZM28 19h1.500v1.500H28ZM22 12h1.500v1.500H22Z" fill="#ffd500" />
    </>
  ),
  co: (
    <>
      <rect width="36" height="26" fill="#fdd000" />
      <path d="M0 13c12 3 22-4 36-2v15H0Z" fill="#1544a8" />
      <path d="M0 19c12 3 22-4 36-2v9H0Z" fill="#d3152b" />
    </>
  ),
};

function Flag({ code }: { code: string }) {
  const id = useId();
  return (
    <svg viewBox="0 0 36 26" className="h-[26px] w-[36px] shrink-0">
      <defs>
        <clipPath id={id}>
          <path d="M0 4c0-1 .5-1 1.500-.8C13 6 22-1.500 34.500.5c1 .2 1.500.5 1.500 1.500v20c0 1-.5 1-1.500.8C23 20.500 13 28 1.500 25.500.5 25.300 0 25 0 24Z" />
        </clipPath>
      </defs>
      <g clipPath={`url(#${id})`}>{flagArt[code]}</g>
    </svg>
  );
}

/* ---------- table ---------- */

type Row = { name: React.ReactNode; count: number; path: string; flag?: string; tall?: boolean; marked?: boolean };

const rows: Row[] = [
  { name: 'Quebec', count: 5, path: 'subdivisions/ca-qc' },
  { name: 'Cape Verde', count: 53, path: 'countries/cv', flag: 'cv' },
  { name: 'Boa Vista', count: 1, path: 'subdivisions/cv-bv' },
  { name: 'Sal', count: 1, path: 'subdivisions/cv-sl' },
  { name: 'Cayman Islands', count: 51, path: 'countries/ky', flag: 'ky' },
  { name: 'Central African Republic', count: 52, path: 'countries/cf', flag: 'cf' },
  { name: 'Chad', count: 53, path: 'countries/td', flag: 'td' },
  { name: 'Chile', count: 198, path: 'countries/cl', flag: 'cl' },
  { name: 'Magallanes', count: 1, path: 'subdivisions/cl-ma' },
  { name: 'Nuble', count: 1, path: 'subdivisions/cl-nb' },
  { name: 'China', count: 689, path: 'countries/cn', flag: 'cn', marked: true },
  { name: 'Christmas Island', count: 47, path: 'countries/cx', flag: 'cx' },
  { name: 'Cocos (Keeling) Islands', count: 47, path: 'countries/cc', flag: 'cc' },
  { name: 'Colombia', count: 143, path: 'countries/co', flag: 'co' },
  { name: <>San Andres, Providencia y<br />Santa Catalina</>, count: 1, path: 'subdivisions/co-sap', tall: true },
  { name: 'Antioquia', count: 1, path: 'subdivisions/co-ant' },
  { name: 'Atlantico', count: 1, path: 'subdivisions/co-atl' },
  { name: 'Bolivar', count: 1, path: 'subdivisions/co-bol' },
  { name: 'Caldas', count: 1, path: 'subdivisions/co-cal' },
  { name: 'Cauca', count: 1, path: 'subdivisions/co-cau' },
  { name: 'Choco', count: 1, path: 'subdivisions/co-cho' },
  { name: 'Huila', count: 1, path: 'subdivisions/co-hui' },
  { name: 'Magdalena', count: 1, path: 'subdivisions/co-mag' },
  { name: 'Narino', count: 1, path: 'subdivisions/co-nar' },
];

function TableRow({ row, striped }: { row: Row; striped: boolean }) {
  return (
    <div
      className={`relative flex shrink-0 border-b-2 border-[#30363d] text-[32px] leading-[48px] whitespace-nowrap text-[#c9d1d9] ${
        row.tall ? 'h-[122px]' : 'h-[74px]'
      } ${striped ? 'bg-[#161b22]' : 'bg-[#0d1117]'}`}
    >
      <div className="flex w-[486px] items-center border-r-2 border-[#30363d] pl-[28px] tracking-[-0.650px]">
        {row.flag ? (
          <>
            <Flag code={row.flag} />
            <span className="ml-[10px] pt-[2px]">{row.name}</span>
          </>
        ) : (
          <div className="-ml-[2px] pt-[2px] indent-[50px]">{row.name}</div>
        )}
      </div>
      <div className="flex w-[196px] items-center justify-end border-r-2 border-[#30363d] pt-[2px] pr-[27px] tracking-[-0.200px]">{row.count}</div>
      <div className="flex items-center pl-[26px]">
        <code className="mt-[4px] flex h-[41px] items-center rounded-[12px] bg-[#6e7681]/40 px-[11px] pt-[1px] font-['DejaVu_Sans_Mono',monospace] text-[27.200px] leading-none">
          {`https://iptv-org.github.io/iptv/${row.path}.m3u`}
        </code>
      </div>
      {row.marked && <div className="absolute top-0 left-[662px] z-10 h-[84px] w-[910px] border-[6px] border-[#ff7800]" />}
    </div>
  );
}

function Readme() {
  return (
    <section className="ml-[64px] flex w-[1792px] shrink-0 flex-col border-x-2 border-[#30363d]">
      <div className="flex h-[98px] shrink-0 items-center border-b-2 border-[#30363d] pl-[34px]">
        <svg viewBox="0 0 28 26" className="h-[26px] w-[28px]" stroke="#8b949e" strokeWidth="2.800" strokeLinecap="round">
          <path d="M9.500 3H27M9.500 13H27M9.500 23H27" />
          <path d="M2 2v2M2 12v2M2 22v2" strokeWidth="2.200" />
        </svg>
        <h2 className="ml-[34px] text-[28px] font-semibold tracking-[-0.200px] text-[#c9d1d9]">README.md</h2>
      </div>
      <div className="flex min-h-0 flex-1 flex-col overflow-hidden">
        <div className="-mt-[38px] ml-[64px] flex h-[1830px] w-[1660px] shrink-0 flex-col border-x-2 border-[#30363d]">
          {rows.map((row, i) => (
            <TableRow key={row.path} row={row} striped={i % 2 === 1} />
          ))}
        </div>
      </div>
    </section>
  );
}

export default function App() {
  return (
    <div className="h-[2112px] w-[3584px] overflow-hidden bg-linear-to-b from-[#3f7f93] to-[#a8a8a8] font-['Inter','Noto_Sans_CJK_SC',sans-serif]">
      <div className="relative flex h-full w-full flex-col overflow-hidden rounded-[20px] bg-[#0d1117]">
        <TabStrip />
        <div className="flex h-[138px] shrink-0 flex-col border-b-2 border-[#8c64b4] bg-[#6f409f]">
          <Toolbar />
          <Bookmarks />
        </div>
        <div className="flex h-[1890px] shrink-0">
          <Sidebar />
          <Readme />
        </div>
        <div className="pointer-events-none absolute inset-0 rounded-[20px] border-2 border-white/25" />
      </div>
    </div>
  );
}
